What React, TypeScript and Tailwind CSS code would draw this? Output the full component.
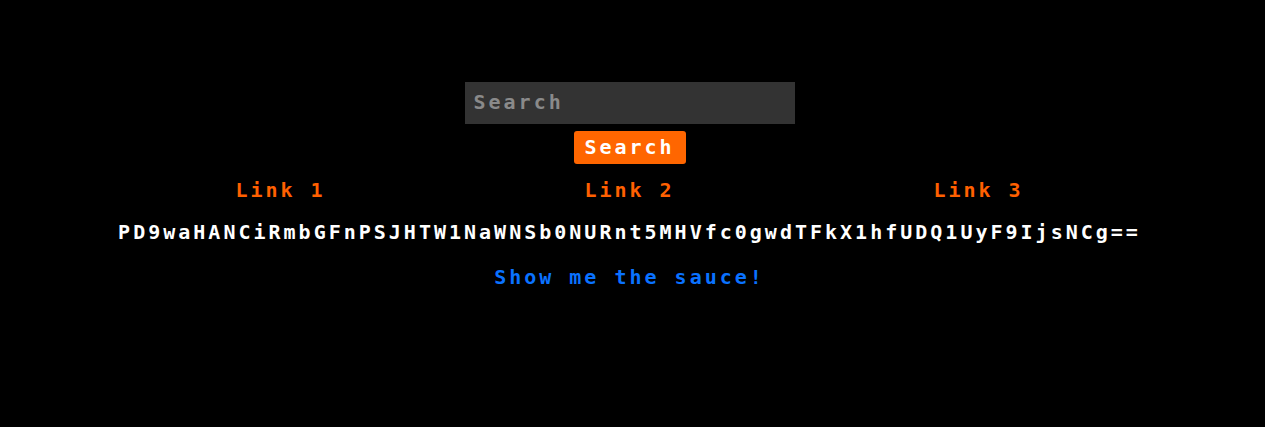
import { useState } from "react";

const FLAG = "PD9waHANCiRmbGFnPSJHTW1NaWNSb0NURnt5MHVfc0gwdTFkX1hfUDQ1UyF9IjsNCg==";

const LINKS = ["Link 1", "Link 2", "Link 3"];

export default function App() {
  const [query, setQuery] = useState("");

  return (
    <main
      className="min-h-[427px] w-full bg-black flex flex-col items-center pt-[82px] pr-[6px] text-[20px] font-bold tracking-[3px]"
      style={{ fontFamily: '"DejaVu Sans Mono", "Liberation Mono", monospace' }}
    >
      <form className="flex flex-col items-center" onSubmit={(e) => e.preventDefault()}>
        <input
          value={query}
          onChange={(e) => setQuery(e.target.value)}
          placeholder="Search"
          className="w-[330px] h-[42px] bg-[#333333] px-[9px] pb-[2px] text-white placeholder:text-[#8a8a8a] outline-none"
        />
        <button
          type="submit"
          className="mt-[7px] w-[112px] h-[33px] rounded-[3px] bg-[#ff6600] text-white leading-none pb-[2px]"
        >
          Search
        </button>
      </form>

      <nav className="mt-[14px] w-[1047px] grid grid-cols-3 leading-[24px]">
        {LINKS.map((l) => (
          <a key={l} href="#" className="text-center text-[#ff6000]">
            {l}
          </a>
        ))}
      </nav>

      <p className="mt-[18px] text-white leading-[24px]">{FLAG}</p>

      <a href="#" className="mt-[21px] text-[#0a72ff] leading-[24px]">
        Show me the sauce!
      </a>
    </main>
  );
}
